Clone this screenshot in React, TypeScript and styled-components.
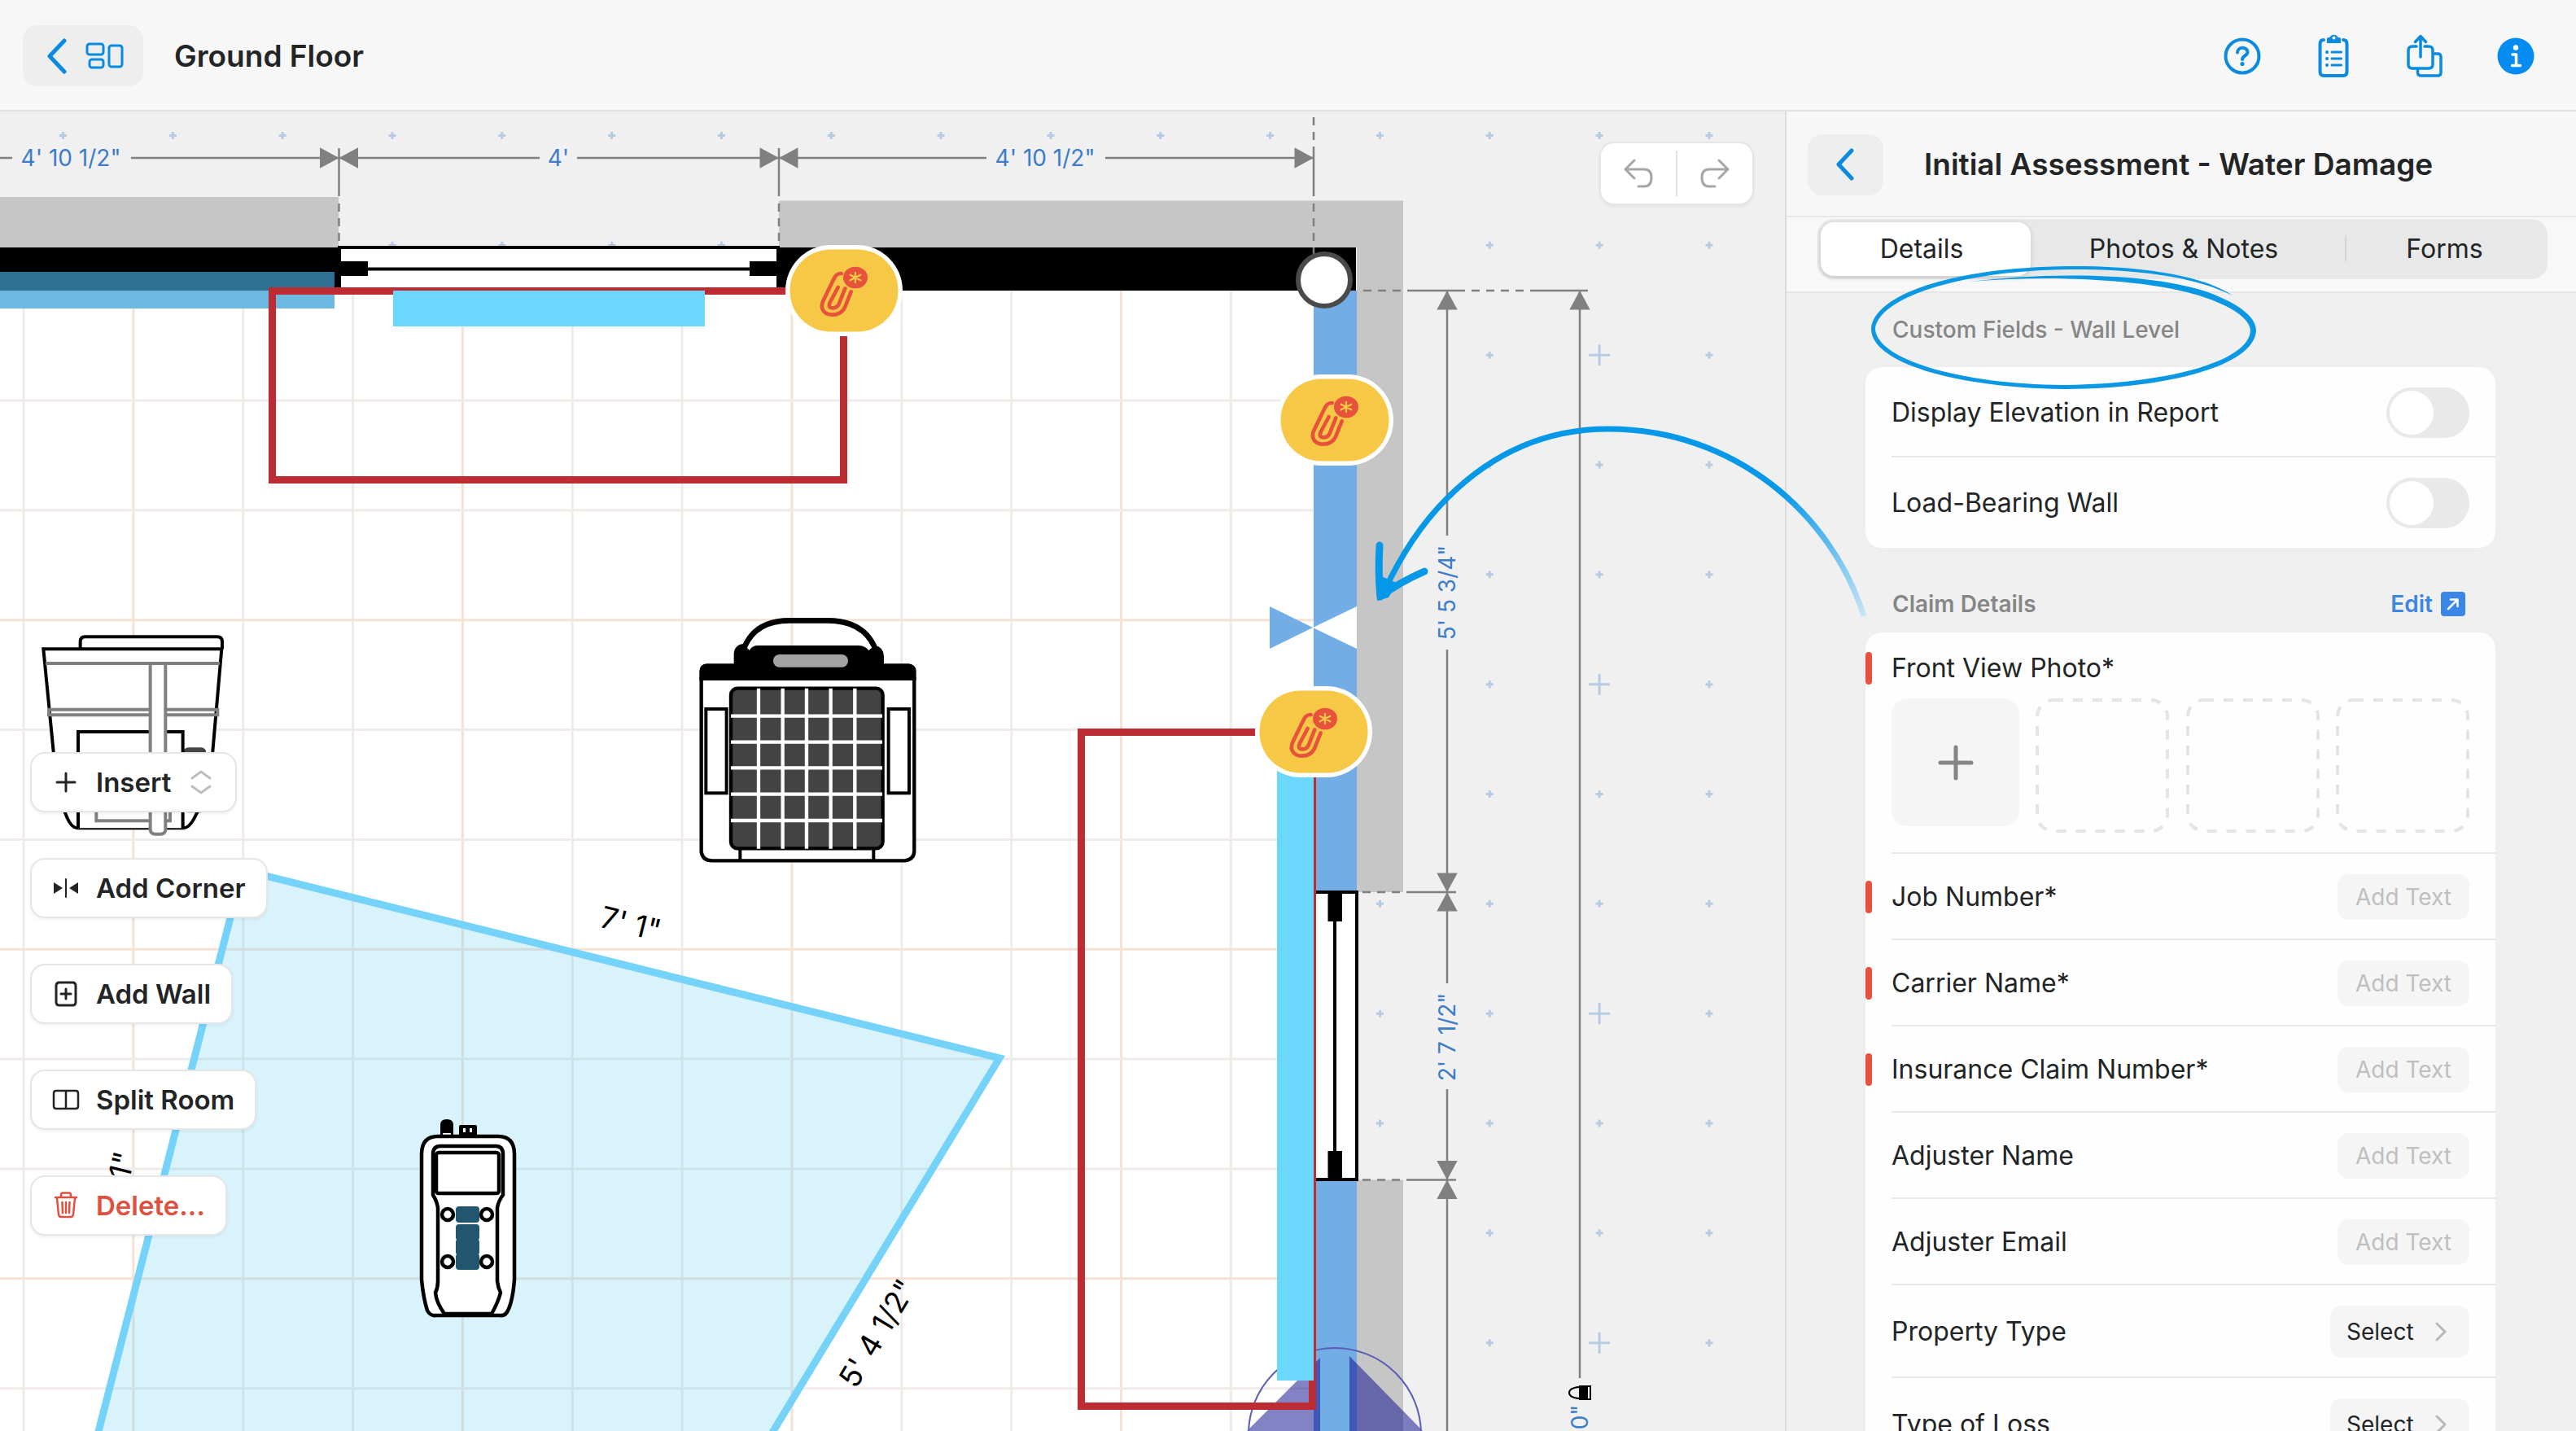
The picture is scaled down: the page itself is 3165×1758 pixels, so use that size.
import React, { useState } from "react";
import styled, { createGlobalStyle, css } from "styled-components";

const GlobalStyle = createGlobalStyle`
  *, *::before, *::after { box-sizing: border-box; }
  body { margin: 0; background: #f0f0f0; }
  body, button, input, select {
    font-family: Inter, "Liberation Sans", Arial, sans-serif;
    color: #222426;
  }
  button { border: 0; margin: 0; padding: 0; background: none; cursor: pointer; }
`;

const BLUE = "#0a8ae0";

/* ---------- page frame ---------- */

const Page = styled.div`
  display: flex;
  flex-direction: column;
  height: 100vh;
  overflow: hidden;
`;

const TopBar = styled.header`
  display: flex;
  align-items: center;
  gap: 38px;
  flex: none;
  height: 137px;
  padding: 2px 46px 0 28px;
  background: #f7f7f7;
  border-bottom: 2px solid #e2e2e2;
`;

const SoftButton = styled.button<{ $width: number }>`
  display: flex;
  align-items: center;
  justify-content: center;
  gap: 22px;
  width: ${(p) => p.$width}px;
  height: 75px;
  border-radius: 18px;
  background: #eeeeee;
  &:has(svg + svg) { padding-left: 6px; }
`;

const Title = styled.h1`
  margin: 0;
  font-size: 37px;
  line-height: 44px;
  font-weight: 600;
`;

const TopActions = styled.nav`
  display: flex;
  align-items: center;
  gap: 56px;
  margin-left: auto;
`;

const IconButton = styled.button`
  display: flex;
  width: 56px;
  height: 60px;
  align-items: center;
  justify-content: center;
`;

const Body = styled.div`
  position: relative;
  display: flex;
  flex: 1;
  min-height: 0;
`;

const Canvas = styled.main`
  position: relative;
  flex: 1;
  min-width: 0;
  overflow: hidden;
  background: #f0f0f0;
`;

const Plan = styled.svg`
  position: absolute;
  inset: 0;
  width: 100%;
  height: 100%;
`;

const Markup = styled.svg`
  position: absolute;
  top: 0;
  right: 0;
  width: 1500px;
  height: 700px;
  pointer-events: none;
`;

/* ---------- floating tools ---------- */

const Tools = styled.div`
  position: absolute;
  top: 787px;
  left: 37px;
  display: flex;
  flex-direction: column;
  align-items: flex-start;
  gap: 56px;
`;

const floating = css`
  background: #fff;
  border: 2px solid #e6e6e6;
  box-shadow: 0 2px 4px rgba(0, 0, 0, 0.06);
`;

const Tool = styled.button<{ $danger?: boolean }>`
  ${floating}
  display: flex;
  align-items: center;
  gap: 18px;
  height: 74px;
  padding: 0 25px 0 23px;
  border-radius: 18px;
  font-size: 33px;
  line-height: 40px;
  font-weight: 600;
  ${(p) => p.$danger && "color: #e0503f;"}
`;

const History = styled.div`
  ${floating}
  position: absolute;
  top: 37px;
  right: 38px;
  display: flex;
  align-items: center;
  height: 78px;
  width: 190px;
  border-radius: 18px;
`;

const HistoryButton = styled.button`
  display: flex;
  flex: 1;
  height: 56px;
  align-items: center;
  justify-content: center;
  & + & { border-left: 2px solid #e2e2e2; }
`;

/* ---------- side panel ---------- */

const Panel = styled.aside`
  display: flex;
  flex-direction: column;
  flex: none;
  width: 972px;
  background: #f0f0f0;
  border-left: 2px solid #dcdcdc;
`;

const PanelHead = styled.div`
  display: flex;
  align-items: center;
  flex: none;
  gap: 50px;
  height: 130px;
  padding: 2px 26px 0;
  background: #f7f7f7;
  border-bottom: 2px solid #e6e6e6;
`;

const PanelTitle = styled.h2`
  margin: 0;
  font-size: 37px;
  line-height: 44px;
  font-weight: 600;
`;

const TabArea = styled.div`
  flex: none;
  padding: 2px 35px 15px 38px;
  background: #f8f8f8;
  border-bottom: 2px solid #e6e6e6;
`;

const TabList = styled.div`
  display: grid;
  grid-template-columns: 258fr 386fr 245fr;
  height: 74px;
  padding: 4px;
  border-radius: 20px;
  background: #e8e8e8;
`;

const Tab = styled.button<{ $active: boolean; $divided: boolean }>`
  position: relative;
  padding-right: ${(p) => (p.$divided ? 0 : 10)}px;
  border-radius: 16px;
  font-size: 32px;
  line-height: 40px;
  ${(p) =>
    p.$active &&
    "background: #fff; box-shadow: 0 2px 6px rgba(0, 0, 0, 0.16);"}
  ${(p) =>
    p.$divided &&
    `&::before {
      content: "";
      position: absolute;
      left: 0;
      top: 16px;
      bottom: 18px;
      width: 2px;
      background: #d6d6d6;
    }`}
`;

const Scroll = styled.div`
  flex: 1;
  min-height: 0;
  overflow: hidden;
  padding: 0 99px 0 97px;
`;

const SectionHead = styled.div<{ $low?: boolean }>`
  display: flex;
  align-items: center;
  justify-content: space-between;
  padding: ${(p) => (p.$low ? "49px 37px 15px 33px" : "25px 37px 26px 33px")};
`;

const SectionTitle = styled.h3<{ $plain?: boolean }>`
  margin: 0;
  font-size: 28px;
  line-height: 40px;
  font-weight: ${(p) => (p.$plain ? 500 : 600)};
  color: #868686;
`;

const EditLink = styled.a`
  display: flex;
  align-items: center;
  gap: 10px;
  font-size: 28px;
  line-height: 40px;
  font-weight: 600;
  color: #3b87e0;
  text-decoration: none;
`;

const Card = styled.section`
  border-radius: 20px;
  background: #fefefe;
  box-shadow: 0 0 16px rgba(0, 0, 0, 0.02);
`;

const Row = styled.div<{ $height?: number }>`
  display: flex;
  align-items: center;
  justify-content: space-between;
  position: relative;
  height: ${(p) => p.$height ?? 106}px;
  margin-left: 32px;
  padding-top: 2px;
  padding-right: 32px;
  border-bottom: 2px solid #e8e8e8;
  &:last-child { border-bottom-color: transparent; }
`;

const FieldLabel = styled.label<{ $required?: boolean }>`
  position: relative;
  font-size: 32px;
  line-height: 40px;
  ${(p) =>
    p.$required &&
    `&::before {
      content: "";
      position: absolute;
      left: -32px;
      top: 0;
      width: 8px;
      height: 40px;
      border-radius: 4px;
      background: #e8513f;
    }`}
`;

const Switch = styled.input`
  appearance: none;
  display: flex;
  align-items: center;
  width: 102px;
  height: 62px;
  margin: 0;
  padding: 4px;
  border-radius: 31px;
  background: #e9e9e9;
  &::before {
    content: "";
    width: 54px;
    height: 54px;
    border-radius: 50%;
    background: #fff;
  }
  &:checked { justify-content: flex-end; background: #0a8ae0; }
`;

const TextField = styled.input`
  width: 162px;
  height: 56px;
  padding: 0;
  border: 0;
  border-radius: 14px;
  background: #f5f5f5;
  font-size: 28px;
  text-align: center;
  &::placeholder { color: #bfbfbf; opacity: 1; }
`;

const Picker = styled.span`
  display: flex;
  align-items: center;
  width: 171px;
  height: 64px;
  padding: 0 28px 0 20px;
  border-radius: 14px;
  background: #f5f5f5;
  select {
    appearance: none;
    flex: 1;
    min-width: 0;
    padding: 0;
    border: 0;
    background: none;
    font-size: 28px;
    line-height: 36px;
  }
`;

const PhotoRow = styled.div`
  position: relative;
  margin-left: 32px;
  padding: 24px 32px 24px 0;
  border-bottom: 2px solid #e8e8e8;
`;

const Photos = styled.div`
  display: flex;
  align-items: flex-start;
  justify-content: space-between;
  margin-top: 17px;
`;

const AddPhoto = styled.button`
  display: flex;
  align-items: center;
  justify-content: center;
  width: 157px;
  height: 157px;
  border-radius: 20px;
  background: #f5f5f5;
`;

/* ---------- icons ---------- */

const Chevron = ({ h, stroke = BLUE }: { h: number; stroke?: string }) => (
  <svg width={h / 2 + 6} height={h + 6} fill="none" stroke={stroke} strokeWidth={5} strokeLinecap="round" strokeLinejoin="round">
    <path d={`M${h / 2 + 2} 3 L3 ${h / 2 + 3} L${h / 2 + 2} ${h + 3}`} />
  </svg>
);

const FloorsIcon = () => (
  <svg width="48" height="34" fill="none" stroke={BLUE} strokeWidth="3">
    <rect x="2" y="2" width="20" height="13" rx="3" />
    <rect x="5" y="21" width="17" height="10" rx="3" />
    <rect x="29" y="4" width="16" height="26" rx="3" />
  </svg>
);

const HelpIcon = () => (
  <svg width="46" height="46" fill="none" stroke={BLUE} strokeWidth="4" strokeLinecap="round">
    <circle cx="23" cy="23" r="20.5" />
    <path d="M17 18.5C17 11 29.5 11 29.5 18C29.5 22.5 23 22.5 23 27" />
    <circle cx="23" cy="32.5" r="2.6" fill={BLUE} stroke="none" />
  </svg>
);

const ClipboardIcon = () => (
  <svg width="40" height="56" fill="none" stroke={BLUE} strokeWidth="4" strokeLinecap="round">
    <path d="M8 8Q3.5 8 3.5 13V47Q3.5 52 8 52H32Q36.5 52 36.5 47V13Q36.5 8 32 8" />
    <path d="M12 12V6.5Q12 5 14 5H15.5A5.5 5.5 0 0 1 25.5 5H27Q29 5 29 6.5V12Z" fill={BLUE} stroke="none" />
    <circle cx="20.5" cy="5.5" r="2" fill="#f7f7f7" stroke="none" />
    <path d="M18 23H29.5M18 31H29.5M18 39H29.5" strokeWidth="3" />
    <path d="M12 23h.1M12 31h.1M12 39h.1" />
  </svg>
);

const ShareIcon = () => (
  <svg width="48" height="56" fill="none" stroke={BLUE} strokeWidth="3.5" strokeLinecap="round" strokeLinejoin="round">
    <path d="M14 16H9Q4 16 4 21V38Q4 43 9 43H29Q34 43 34 38V21Q34 16 29 16H24" />
    <path d="M19 29V4M12.5 10.5L19 3.5L25.5 10.5" />
    <path d="M36 25H40Q44 25 44 29V48Q44 52 40 52H20Q15.5 52 15.5 48V45" />
  </svg>
);

const InfoIcon = () => (
  <svg width="46" height="46" fill="none" stroke="#fff" strokeWidth="3.5" strokeLinecap="round" strokeLinejoin="round">
    <circle cx="23" cy="23" r="22.5" fill="#048cf2" stroke="none" />
    <circle cx="23" cy="12.5" r="3.2" fill="#fff" stroke="none" />
    <path d="M19 21H23.5V34M18.5 34.5H28.5" />
  </svg>
);

const UndoIcon = ({ flip }: { flip?: boolean }) => (
  <svg width="40" height="38" viewBox="0 0 40 38" fill="none" stroke="#a6a6a6" strokeWidth="3" strokeLinecap="round" strokeLinejoin="round">
    <g transform={flip ? "translate(40 0) scale(-1 1)" : undefined}>
      <path d="M15 3L4 14L15 25M4 14H27Q36 14 36 24Q36 35 27 35H20" />
    </g>
  </svg>
);

const toolIcons = {
  insert: <path d="M17 6V28M6 17H28" />,
  corner: (
    <>
      <path d="M17 6V28" strokeWidth="2" />
      <path d="M2 10L13 17L2 24ZM32 10L21 17L32 24Z" fill="#222426" stroke="none" />
    </>
  ),
  wall: <path d="M9 3H25Q29 3 29 7V27Q29 31 25 31H9Q5 31 5 27V7Q5 3 9 3ZM17 11V23M11 17H23" />,
  split: <path d="M5 6H29Q32 6 32 9V25Q32 28 29 28H5Q2 28 2 25V9Q2 6 5 6ZM17 6V28" strokeWidth="2.5" />,
  trash: (
    <path d="M4 7H30M6 8L8 28Q8.5 31 11 31H23Q25.5 31 26 28L28 8M11 7V4Q11 1.5 13 1.5H21Q23 1.5 23 4V7M12.5 13L13 26M17 13V26M21.5 13L21 26" strokeWidth="2.5" />
  ),
};

const ToolIcon = ({ name }: { name: keyof typeof toolIcons }) => (
  <svg width="38" height="34" viewBox="-2 0 38 34" fill="none" stroke={name === "trash" ? "#e0503f" : "#222426"} strokeWidth="3" strokeLinecap="round">
    {toolIcons[name]}
  </svg>
);

/* ---------- floor plan ---------- */

const DIM = "#808080";
const WALL = "#73ade6";
const range = (n: number) => Array.from({ length: n }, (_, i) => i);

const OutsideGrid = () => (
  <g stroke="#b7cbe3">
    {range(16).map((c) =>
      range(12).map((r) => {
        const x = 77.5 + 134.83 * c;
        const y = 166.5 + 134.83 * r;
        const s = c % 3 === 2 && r % 3 === 2 ? 13 : 4.5;
        return <path key={`${c}-${r}`} d={`M${x - s} ${y}h${2 * s}M${x} ${y - s}v${2 * s}`} strokeWidth={3} />;
      })
    )}
  </g>
);

const RoomGrid = () => (
  <g>
    <rect x="0" y="357" width="1614" height="1401" fill="#fff" />
    <g strokeWidth="3">
      {range(12).map((i) => {
        const x = 29 + 134.85 * i;
        return <path key={i} d={`M${x} 357V1758`} stroke={i % 3 === 1 ? "#f6e2d4" : "#f0ebe8"} />;
      })}
      {range(10).map((i) => {
        const y = 492 + 134.85 * i;
        return <path key={i} d={`M0 ${y}H1614`} stroke={i % 3 === 2 ? "#f6e2d4" : "#f0ebe8"} />;
      })}
    </g>
  </g>
);

const ArrowTip = ({ x, y, turn }: { x: number; y: number; turn: number }) => (
  <path transform={`translate(${x} ${y}) rotate(${turn})`} d="M0 0L-23.5 -12.7V12.7Z" fill={DIM} />
);

const DimText = ({ x, y, turn = 0, children }: { x: number; y: number; turn?: number; children: string }) => (
  <text transform={`translate(${x} ${y}) rotate(${turn})`} y="10" textAnchor="middle" fontSize="28" fill="#3d7cc9">
    {children}
  </text>
);

const Dimensions = () => (
  <g>
    <g stroke={DIM} strokeWidth="2.5" fill="none">
      <path d="M0 194H15M161 194H663M709 194H1212M1358 194H1614" />
      <path d="M416.5 182V241M957 182V241M1614 182V241" />
      <path d="M1778 357V658M1778 798V1208M1778 1338V1758M1941 357V1693" />
      <path d="M1729 357H1790M1889 357H1951M1728 1096H1789M1728 1449.5H1789" />
      <path d="M416.5 250V303M957 250V303M1614 144V182M1614 250V313" strokeDasharray="10 8" />
      <path d="M1675 357H1729M1790 357H1889M1674 1096H1723M1674 1449.5H1723" strokeDasharray="10 8" />
    </g>
    <ArrowTip x={416.5} y={194} turn={0} />
    <ArrowTip x={416.5} y={194} turn={180} />
    <ArrowTip x={957} y={194} turn={0} />
    <ArrowTip x={957} y={194} turn={180} />
    <ArrowTip x={1614} y={194} turn={0} />
    <ArrowTip x={1778} y={357} turn={-90} />
    <ArrowTip x={1778} y={1096} turn={90} />
    <ArrowTip x={1778} y={1096} turn={-90} />
    <ArrowTip x={1778} y={1449.5} turn={90} />
    <ArrowTip x={1778} y={1449.5} turn={-90} />
    <ArrowTip x={1941} y={357} turn={-90} />
    <DimText x={87} y={194}>4' 10 1/2"</DimText>
    <DimText x={686} y={194}>4'</DimText>
    <DimText x={1284} y={194}>4' 10 1/2"</DimText>
    <DimText x={1778} y={728} turn={-90}>5' 5 3/4"</DimText>
    <DimText x={1778} y={1274} turn={-90}>2' 7 1/2"</DimText>
    <DimText x={1941} y={1741} turn={-90}>0"</DimText>
    <path d="M1940 1702H1951V1720H1940Z" fill="#000" />
    <path d="M1940 1704Q1928 1705 1928 1711Q1928 1717 1940 1718M1951 1703H1954V1719H1951" fill="none" stroke="#000" strokeWidth="2" />
  </g>
);

const ClipBadge = ({ x, y }: { x: number; y: number }) => (
  <g transform={`translate(${x} ${y})`}>
    <rect x="-72" y="-56" width="144" height="112" rx="56" fill="#fff" />
    <rect x="-66.5" y="-50.5" width="133" height="101" rx="50" fill="#f6c846" />
    <g transform="scale(0.3333) translate(-300 -258)" fill="none" stroke="#e8513b" strokeWidth="14" strokeLinecap="round">
      <path d="M290 195C274 194 268 204 262 216L224 294C208 328 230 347 258 347C282 347 294 338 303 320L326 262" />
      <path d="M278 246L249 300C240 320 250 322 260 322C268 322 276 318 281 308L304 250" />
      <ellipse cx="342" cy="210" rx="45" ry="40" fill="#e8513b" stroke="none" />
      <path d="M342 192V228M323 200L361 220M361 200L323 220" stroke="#f6c846" strokeWidth="7" />
    </g>
  </g>
);

const Bucket = () => (
  <g transform="translate(40 740) scale(0.3333)" fill="none" stroke="#000" strokeWidth="12">
    <path d="M176 172V145Q176 127 194 127H680Q699 127 699 145V172" fill="#fff" />
    <path d="M40 172H697L664 550Q655 700 604 780Q580 832 556 832H166Q140 832 120 775Q85 700 77 550Z" fill="#fff" />
    <rect x="556" y="535" width="84" height="240" rx="18" fill="#454545" stroke="none" />
    <path d="M168 832V477H554V832" fill="#fff" />
    <g stroke="#808080">
      <path d="M48 225H690M60 395H682V415H60Z" />
      <rect x="235" y="640" width="272" height="165" />
      <path d="M434 225H490V835Q490 854 474 854H450Q434 854 434 835Z" fill="#fff" />
    </g>
  </g>
);

const AirScrubber = () => (
  <g transform="translate(820 720) scale(0.3333)">
    <path d="M284 225Q325 127 450 127H590Q720 127 764 225" fill="none" stroke="#000" strokeWidth="20" />
    <path d="M125 340V980Q130 1012 165 1012H875Q910 1008 910 975V340Z" fill="#fff" stroke="#000" strokeWidth="13" />
    <path d="M118 347V312Q120 288 145 286H245V250Q247 215 282 213L302 237Q312 219 335 219H705Q730 221 742 237L765 219Q797 225 798 258V286H890Q915 290 917 312V347Z" />
    <rect x="390" y="252" width="276" height="47" rx="23" fill="#a3a3a3" />
    <rect x="234" y="377" width="560" height="590" rx="24" fill="#434343" stroke="#000" strokeWidth="13" />
    <g stroke="#fff" strokeWidth="13">
      {[336, 425, 513, 602, 691].map((x) => <path key={x} d={`M${x} 377V968`} />)}
      {[479, 575, 670, 767, 864].map((y) => <path key={y} d={`M234 ${y}H792`} />)}
    </g>
    <g fill="#fff" stroke="#000" strokeWidth="12">
      <rect x="142" y="453" width="76" height="310" />
      <rect x="815" y="453" width="76" height="310" />
      <path d="M268 972V1012M760 972V1012" />
    </g>
  </g>
);

const Meter = () => (
  <g fill="#fff" stroke="#000" strokeWidth="4.5">
    <path d="M541 1396V1382Q541 1375 549 1375Q557 1375 557 1382V1396Z" fill="#000" stroke="none" />
    <rect x="564" y="1382" width="22" height="14" rx="2" fill="#000" stroke="none" />
    <path d="M569 1386h3v5h-3zM577 1386h3v5h-3zM544 1392h10v2h-10z" stroke="none" />
    <path d="M518 1418Q518 1396 538 1396H612Q632 1396 632 1418V1572Q630 1598 624 1610Q621 1617 614 1616H535Q529 1617 525 1610Q520 1594 518 1572Z" />
    <path d="M546 1614Q536 1600 535 1588Q538 1582 538 1574V1484Q537 1476 532 1468V1418Q532 1408 541 1408H609Q618 1408 618 1418V1468Q612 1476 611 1484V1574Q612 1582 615 1588Q612 1600 604 1614Z" />
    <rect x="536" y="1416" width="77" height="50" rx="3" />
    {[550, 598].map((x) => [1492, 1550].map((y) => <circle key={`${x}${y}`} cx={x} cy={y} r="7" />))}
    <g fill="#22566e" stroke="none">
      <rect x="560" y="1482" width="29" height="20" rx="4" />
      <rect x="560" y="1504" width="29" height="20" rx="4" />
      <rect x="560" y="1522" width="29" height="20" rx="4" />
      <rect x="560" y="1540" width="29" height="20" rx="4" />
    </g>
  </g>
);

const PlanText = ({ x, y, turn, children }: { x: number; y: number; turn: number; children: string }) => (
  <text transform={`translate(${x} ${y}) rotate(${turn})`} y="13" textAnchor="middle" fontSize="37" fill="#000">
    {children}
  </text>
);

const FloorPlan = () => (
  <Plan role="img" aria-label="Ground floor plan">
    <g transform="translate(0 -137)">
      <OutsideGrid />
      <g fill="#c6c6c6">
        <path d="M0 242H416V304H0ZM957 246.5H1724V1096H1667V304H957Z" />
        <path d="M1667 1449.5H1724V1758H1667Z" />
      </g>
      <RoomGrid />

      <path d="M298 1069L1228 1300L938 1778H116Z" fill="rgba(90, 205, 245, 0.23)" />
      <path d="M116 1778L298 1069L1228 1300L938 1778" fill="none" stroke="#75d2f8" strokeWidth="9" />
      <PlanText x={775} y={1135} turn={14}>7' 1"</PlanText>
      <PlanText x={1078} y={1638} turn={-59}>5' 4 1/2"</PlanText>
      <PlanText x={145} y={1452} turn={-76}>7' 1"</PlanText>
      <Bucket />
      <AirScrubber />
      <Meter />

      <rect x="1614" y="357" width="53" height="1401" fill={WALL} />
      <path d="M1560 745L1613 771L1560 797Z" fill={WALL} />
      <path d="M1667 745L1613 771L1667 797Z" fill="#fff" />
      <rect x="1615" y="1096" width="52" height="353" fill="#fff" stroke="#000" strokeWidth="4" />
      <path d="M1640 1098V1447" stroke="#000" strokeWidth="4" />
      <path d="M1631.5 1096H1649V1132H1631.5ZM1631.5 1414H1649V1449H1631.5Z" />
      <g fill="rgba(5, 5, 140, 0.5)">
        <path d="M1622 1668L1528 1762H1622Z" />
        <path d="M1658 1666L1752 1762H1658Z" />
      </g>
      <circle cx="1640" cy="1762" r="106" fill="none" stroke="#5c5cb8" strokeWidth="2" />

      <rect x="1569" y="910" width="45" height="786" fill="#6cd7fc" />
      <path d="M1612.5 1696V1727.5H1328.5V899.5H1600" fill="none" stroke="#bd2c33" strokeWidth="9" />
      <path d="M1615.5 899V1700" stroke="#bd2c33" strokeWidth="3" />

      <rect x="0" y="304" width="417" height="53" />
      <rect x="957" y="304" width="709" height="53" />
      <rect x="0" y="334" width="411" height="23" fill="#2f6f94" />
      <rect x="0" y="357" width="411" height="22" fill="#6db8e0" />
      <rect x="417" y="304" width="539" height="53" fill="#fff" stroke="#000" strokeWidth="4" />
      <path d="M417 330.5H956" stroke="#000" strokeWidth="4" />
      <path d="M417 321H452V339H417ZM921 321H956V339H921Z" />
      <rect x="334.5" y="357.5" width="702" height="232" fill="none" stroke="#bd2c33" strokeWidth="9" />
      <rect x="483" y="357" width="383" height="44" fill="#6cd7fc" />

      <Dimensions />
      <circle cx="1627" cy="344" r="32" fill="#fff" stroke="#4a4a4a" strokeWidth="6" />
      <ClipBadge x={1037} y={357} />
      <ClipBadge x={1640} y={516} />
      <ClipBadge x={1614} y={899} />
    </g>
  </Plan>
);

/* Hand-drawn callout: ring round the section title, arrow to the wall. */
const Callout = () => (
  <Markup viewBox="1665 137 1500 700" aria-hidden="true">
    <defs>
      <linearGradient id="fade" gradientUnits="userSpaceOnUse" x1="2190" y1="600" x2="2290" y2="765">
        <stop offset="0" stopColor="#0597e8" />
        <stop offset="1" stopColor="#cfe8f4" />
      </linearGradient>
    </defs>
    <path
      d="M1700 728C1722 680 1750 640 1778 612C1835 555 1900 527 1976 527C2130 527 2250 630 2290 757"
      fill="none"
      stroke="url(#fade)"
      strokeWidth="7"
    />
    <path d="M1695 670Q1693 705 1696 733Q1718 716 1750 702" fill="none" stroke="#0597e8" strokeWidth="9" strokeLinecap="round" strokeLinejoin="round" />
    <path d="M1690 705L1692 738L1706 734L1716 716Z" fill="#0597e8" />
    <path
      d="M2420 346C2520 334 2640 335 2710 358C2752 373 2772 390 2772 406C2770 450 2660 478 2535 478C2400 476 2299 445 2299 404C2302 362 2400 326 2560 327C2640 328 2710 340 2743 363C2700 342 2640 332 2560 331C2410 330 2308 366 2304 404C2306 442 2410 472 2535 473C2655 472 2763 446 2765 406C2764 392 2745 377 2702 363C2640 344 2530 337 2420 346Z"
      fill="#0a97e4"
    />
  </Markup>
);

/* ---------- content ---------- */

const tools: { icon: keyof typeof toolIcons; label: string }[] = [
  { icon: "insert", label: "Insert" },
  { icon: "corner", label: "Add Corner" },
  { icon: "wall", label: "Add Wall" },
  { icon: "split", label: "Split Room" },
  { icon: "trash", label: "Delete..." },
];

const textFields = [
  { id: "job", label: "Job Number*", required: true },
  { id: "carrier", label: "Carrier Name*", required: true },
  { id: "claim", label: "Insurance Claim Number*", required: true },
  { id: "adjuster", label: "Adjuster Name", required: false },
  { id: "email", label: "Adjuster Email", required: false },
];

const pickFields = [
  { id: "property", label: "Property Type" },
  { id: "loss", label: "Type of Loss" },
];

const switches = [
  { id: "elevation", label: "Display Elevation in Report" },
  { id: "bearing", label: "Load-Bearing Wall" },
];

export default function App() {
  const [tab, setTab] = useState("Details");
  return (
    <Page>
      <GlobalStyle />
      <TopBar>
        <SoftButton $width={148} aria-label="Back to floors">
          <Chevron h={38} />
          <FloorsIcon />
        </SoftButton>
        <Title>Ground Floor</Title>
        <TopActions>
          <IconButton aria-label="Help"><HelpIcon /></IconButton>
          <IconButton aria-label="Checklist"><ClipboardIcon /></IconButton>
          <IconButton aria-label="Share"><ShareIcon /></IconButton>
          <IconButton aria-label="Info"><InfoIcon /></IconButton>
        </TopActions>
      </TopBar>

      <Body>
        <Canvas>
          <FloorPlan />
          <History>
            <HistoryButton aria-label="Undo"><UndoIcon /></HistoryButton>
            <HistoryButton aria-label="Redo"><UndoIcon flip /></HistoryButton>
          </History>
          <Tools>
            {tools.map((t) => (
              <Tool key={t.label} $danger={t.icon === "trash"}>
                <ToolIcon name={t.icon} />
                {t.label}
                {t.icon === "insert" && (
                  <svg width="36" height="30" viewBox="-6 0 36 30" fill="none" stroke="#bdbdbd" strokeWidth="3" strokeLinecap="round">
                    <path d="M2 10L13 2L24 10M2 20L13 28L24 20" />
                  </svg>
                )}
              </Tool>
            ))}
          </Tools>
        </Canvas>

        <Panel>
          <PanelHead>
            <SoftButton $width={93} aria-label="Back"><Chevron h={34} /></SoftButton>
            <PanelTitle>Initial Assessment - Water Damage</PanelTitle>
          </PanelHead>
          <TabArea>
            <TabList role="tablist">
              {["Details", "Photos & Notes", "Forms"].map((name) => (
                <Tab key={name} role="tab" aria-selected={tab === name} $active={tab === name} $divided={name === "Forms"} onClick={() => setTab(name)}>
                  {name}
                </Tab>
              ))}
            </TabList>
          </TabArea>

          <Scroll>
            <SectionHead>
              <SectionTitle $plain>Custom Fields - Wall Level</SectionTitle>
            </SectionHead>
            <Card>
              {switches.map((s) => (
                <Row key={s.id} $height={111}>
                  <FieldLabel htmlFor={s.id}>{s.label}</FieldLabel>
                  <Switch id={s.id} type="checkbox" role="switch" />
                </Row>
              ))}
            </Card>

            <SectionHead $low>
              <SectionTitle>Claim Details</SectionTitle>
              <EditLink href="#edit">
                Edit
                <svg width="30" height="30" fill="none" stroke="#fff" strokeWidth="2.5" strokeLinecap="round" strokeLinejoin="round">
                  <rect width="30" height="30" rx="4" fill="#3b87e8" stroke="none" />
                  <path d="M9 21L20 10M12 9.5H20.5V18" />
                </svg>
              </EditLink>
            </SectionHead>
            <Card>
              <PhotoRow>
                <FieldLabel as="div" $required>Front View Photo*</FieldLabel>
                <Photos>
                  <AddPhoto aria-label="Add front view photo">
                    <svg width="44" height="44" stroke="#858585" strokeWidth="5" strokeLinecap="round">
                      <path d="M22 3V41M3 22H41" />
                    </svg>
                  </AddPhoto>
                  {range(3).map((i) => (
                    <svg key={i} width="164" height="165">
                      <rect x="2" y="2" width="160" height="161" rx="20" fill="none" stroke="#e4e4e4" strokeWidth="4" strokeDasharray="12 12" />
                    </svg>
                  ))}
                </Photos>
              </PhotoRow>
              {textFields.map((f) => (
                <Row key={f.id}>
                  <FieldLabel htmlFor={f.id} $required={f.required}>{f.label}</FieldLabel>
                  <TextField id={f.id} placeholder="Add Text" required={f.required} />
                </Row>
              ))}
              {pickFields.map((f) => (
                <Row key={f.id} $height={114}>
                  <FieldLabel htmlFor={f.id}>{f.label}</FieldLabel>
                  <Picker>
                    <select id={f.id} defaultValue="">
                      <option value="">Select</option>
                    </select>
                    <svg width="14" height="26" fill="none" stroke="#b8b8b8" strokeWidth="3" strokeLinecap="round" strokeLinejoin="round">
                      <path d="M2 3L12 13L2 23" />
                    </svg>
                  </Picker>
                </Row>
              ))}
            </Card>
          </Scroll>
        </Panel>
        <Callout />
      </Body>
    </Page>
  );
}
